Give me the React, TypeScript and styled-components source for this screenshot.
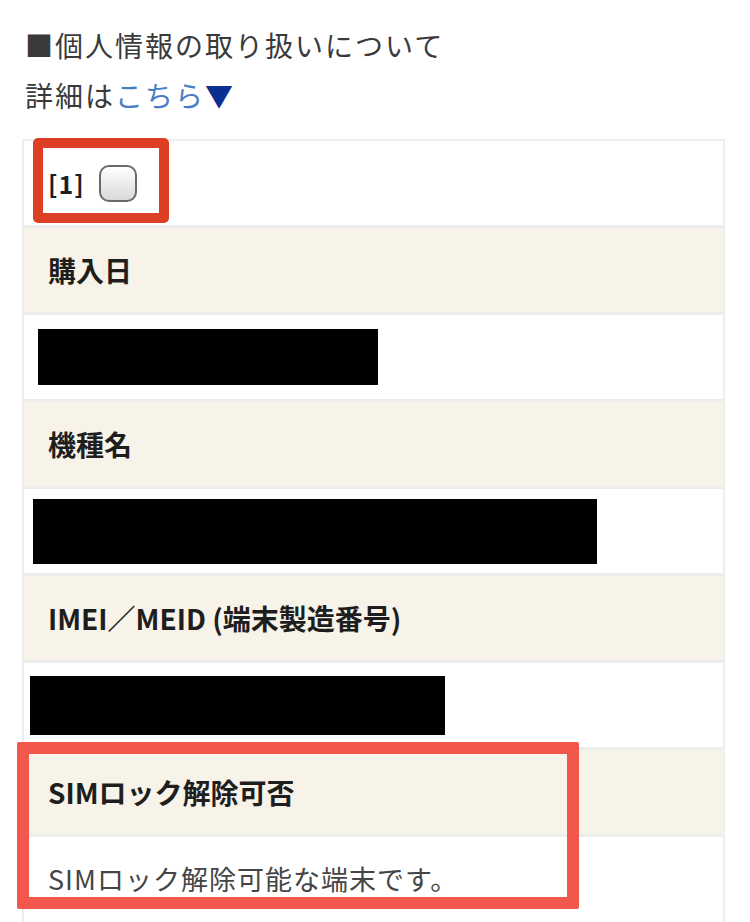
import styled, { createGlobalStyle } from "styled-components";

const GlobalStyle = createGlobalStyle`
  html, body {
    margin: 0;
    padding: 0;
    background: #ffffff;
    overflow: hidden;
  }
  body {
    font-family: "Noto Sans CJK JP", "Noto Sans", sans-serif;
    color: #333333;
  }
`;

const Page = styled.div`
  padding: 20px 25px 0 22px;
`;

const Intro = styled.div`
  padding-left: 3px;
  font-size: 28px;
  line-height: 50px;
  letter-spacing: 2px;
  color: #3a3a3a;
`;

const Line = styled.div`
  white-space: nowrap;
`;

const Link = styled.span`
  color: #4a7dc2;
`;

const Arrow = styled.span`
  color: #0b2e91;
`;

const TableWrap = styled.div`
  position: relative;
  margin-top: 19px;
  width: 703px;
`;

const Table = styled.div`
  display: grid;
  gap: 3px;
  background: #ededed;
  border: 2px solid #eeeeee;
  border-bottom: none;
`;

const Row = styled.div<{ $head?: boolean; $tall?: boolean }>`
  height: ${(p) => (p.$tall ? 96 : 84)}px;
  display: flex;
  align-items: ${(p) => (p.$tall ? "flex-start" : "center")};
  padding-top: ${(p) => (p.$tall ? 22 : 0)}px;
  box-sizing: border-box;
  gap: 14px;
  padding-left: 24px;
  background: ${(p) => (p.$head ? "#f7f3e8" : "#ffffff")};
`;

const Label = styled.div`
  font-size: 28px;
  font-weight: 700;
  color: #1e1e1e;
  white-space: nowrap;
`;

const Value = styled.div`
  font-size: 27px;
  color: #454545;
  white-space: nowrap;
  letter-spacing: 1px;
`;

const Index = styled.span`
  font-size: 25px;
  font-weight: 700;
  color: #1e1e1e;
  letter-spacing: 1px;
`;

const Checkbox = styled.span`
  width: 34px;
  height: 33px;
  border: 2px solid #6a6a6a;
  border-radius: 10px;
  background: linear-gradient(#ffffff, #d9d9d9);
`;

const Redacted = styled.div<{ $w: number; $h: number; $shift: number }>`
  width: ${(p) => p.$w}px;
  height: ${(p) => p.$h}px;
  margin-left: ${(p) => p.$shift}px;
  background: #000000;
`;

const Highlight = styled.div<{ $color: string; $line: number; $radius: number }>`
  position: absolute;
  box-sizing: border-box;
  border: ${(p) => p.$line}px solid ${(p) => p.$color};
  border-radius: ${(p) => p.$radius}px;
  pointer-events: none;
`;

export default function App() {
  return (
    <>
      <GlobalStyle />
      <Page>
        <Intro>
          <Line>■個人情報の取り扱いについて</Line>
          <Line>
            詳細は<Link>こちら</Link>
            <Arrow>▼</Arrow>
          </Line>
        </Intro>
        <TableWrap>
          <Table>
            <Row>
              <Index>[1]</Index>
              <Checkbox />
            </Row>
            <Row $head>
              <Label>購入日</Label>
            </Row>
            <Row>
              <Redacted $w={340} $h={56} $shift={-10} />
            </Row>
            <Row $head>
              <Label>機種名</Label>
            </Row>
            <Row>
              <Redacted $w={564} $h={65} $shift={-15} />
            </Row>
            <Row $head>
              <Label>IMEI／MEID (端末製造番号)</Label>
            </Row>
            <Row>
              <Redacted $w={415} $h={59} $shift={-18} />
            </Row>
            <Row $head>
              <Label>SIMロック解除可否</Label>
            </Row>
            <Row $tall>
              <Value>SIMロック解除可能な端末です。</Value>
            </Row>
          </Table>
          <Highlight
            $color="#dc3f23"
            $line={10}
            $radius={5}
            style={{ left: 11, top: -1, width: 136, height: 85 }}
          />
          <Highlight
            $color="#f2574b"
            $line={12}
            $radius={2}
            style={{ left: -5, top: 603, width: 562, height: 167 }}
          />
        </TableWrap>
      </Page>
    </>
  );
}
